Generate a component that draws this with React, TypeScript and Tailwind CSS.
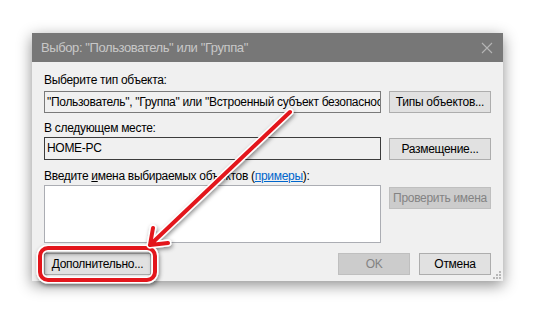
import React from "react";

const font = { fontFamily: '"Segoe UI", "Liberation Sans", Arial, sans-serif' };

const WinButton = ({ label, disabled = false }: { label: string; disabled?: boolean }) => (
  <div
    className={
      "h-[22px] flex items-center justify-center whitespace-nowrap text-[12px] border " +
      (disabled ? "bg-[#cccccc] border-[#bfbfbf] text-[#838383]" : "bg-[#e1e1e1] border-[#adadad] text-black")
    }
  >
    {label}
  </div>
);

const Annotation = () => (
  <svg className="absolute inset-0 pointer-events-none" width={537} height={315} viewBox="0 0 537 315">
    <defs>
      <filter id="sh" x="-20%" y="-20%" width="140%" height="140%">
        <feDropShadow dx="1" dy="2" stdDeviation="2" floodColor="#000" floodOpacity="0.45" />
      </filter>
    </defs>
    <g filter="url(#sh)" fill="none" strokeLinecap="round" strokeLinejoin="round">
      <rect x="40" y="248" width="115" height="32" rx="8" stroke="#ffffff" strokeWidth="7" />
      <rect x="40" y="248" width="115" height="32" rx="8" stroke="#e3161c" strokeWidth="4" />
      <path d="M290 112 L150 245 M153 228 L150 245 L168 243" stroke="#ffffff" strokeWidth="7" />
      <path d="M290 112 L150 245 M153 228 L150 245 L168 243" stroke="#e3161c" strokeWidth="4" />
    </g>
  </svg>
);

// size grip dots in the lower right corner
const Grip = () => (
  <svg className="absolute right-[2px] bottom-[2px]" width="8" height="8" viewBox="0 0 8 8">
    <g fill="#b8b8b8">
      <rect x="6" y="0" width="2" height="2" />
      <rect x="3" y="3" width="2" height="2" />
      <rect x="6" y="3" width="2" height="2" />
      <rect x="0" y="6" width="2" height="2" />
      <rect x="3" y="6" width="2" height="2" />
      <rect x="6" y="6" width="2" height="2" />
    </g>
  </svg>
);

export default function App() {
  return (
    <div className="relative w-[537px] h-[315px] bg-white overflow-hidden" style={font}>
      <div className="pt-[33px] pl-[32px]">
        <div className="relative w-[471px] bg-[#f0f0f0] shadow-[0_4px_14px_rgba(0,0,0,0.45)]">
          <div className="h-[29px] bg-[#777777] flex items-center justify-between pl-[9px] pr-[10px]">
            <span className="text-[13px] tracking-[-0.4px] text-[#c8c8c8] whitespace-nowrap">
              Выбор: "Пользователь" или "Группа"
            </span>
            <svg width="12" height="12" viewBox="0 0 12 12">
              <path d="M1 1 L11 11 M11 1 L1 11" stroke="#b5b5b5" strokeWidth="1.1" />
            </svg>
          </div>
          <div className="px-[12px] pt-[10px] pb-[6px] text-[12px] tracking-[-0.3px] text-black">
            <div className="h-[16px] leading-[16px] mb-[3px] whitespace-nowrap">Выберите тип объекта:</div>
            <div className="grid grid-cols-[337px_102px] gap-x-[8px]">
              <div className="h-[22px] bg-[#f0f0f0] border border-[#7a7a7a] px-[2px] leading-[20px] overflow-hidden whitespace-nowrap">
                "Пользователь", "Группа" или "Встроенный субъект безопасности"
              </div>
              <WinButton label="Типы объектов..." />
            </div>
            <div className="h-[16px] leading-[16px] mt-[7px] mb-[1px] whitespace-nowrap">В следующем месте:</div>
            <div className="grid grid-cols-[337px_102px] gap-x-[8px]">
              <div className="h-[23px] bg-[#f0f0f0] border border-[#3c3c3c] px-[2px] leading-[20px]">HOME-PC</div>
              <div className="mt-[1px]">
                <WinButton label="Размещение..." />
              </div>
            </div>
            <div className="h-[16px] leading-[16px] mt-[8px] mb-[1px] whitespace-nowrap">
              Введите <span className="underline">и</span>мена выбираемых объектов (
              <span className="text-[#0066cc] underline">примеры</span>):
            </div>
            <div className="grid grid-cols-[337px_102px] gap-x-[8px] items-start">
              <div className="h-[58px] bg-white border border-[#abadb3]" />
              <div className="mt-[2px]">
                <WinButton label="Проверить имена" disabled />
              </div>
            </div>
            <div className="flex items-center mt-[10px]">
              <div className="w-[107px]">
                <WinButton label="Дополнительно..." />
              </div>
              <div className="flex-1" />
              <div className="w-[72px]">
                <WinButton label="OK" disabled />
              </div>
              <div className="w-[72px] ml-[9px]">
                <WinButton label="Отмена" />
              </div>
            </div>
          </div>
          <Grip />
        </div>
      </div>
      <Annotation />
    </div>
  );
}
